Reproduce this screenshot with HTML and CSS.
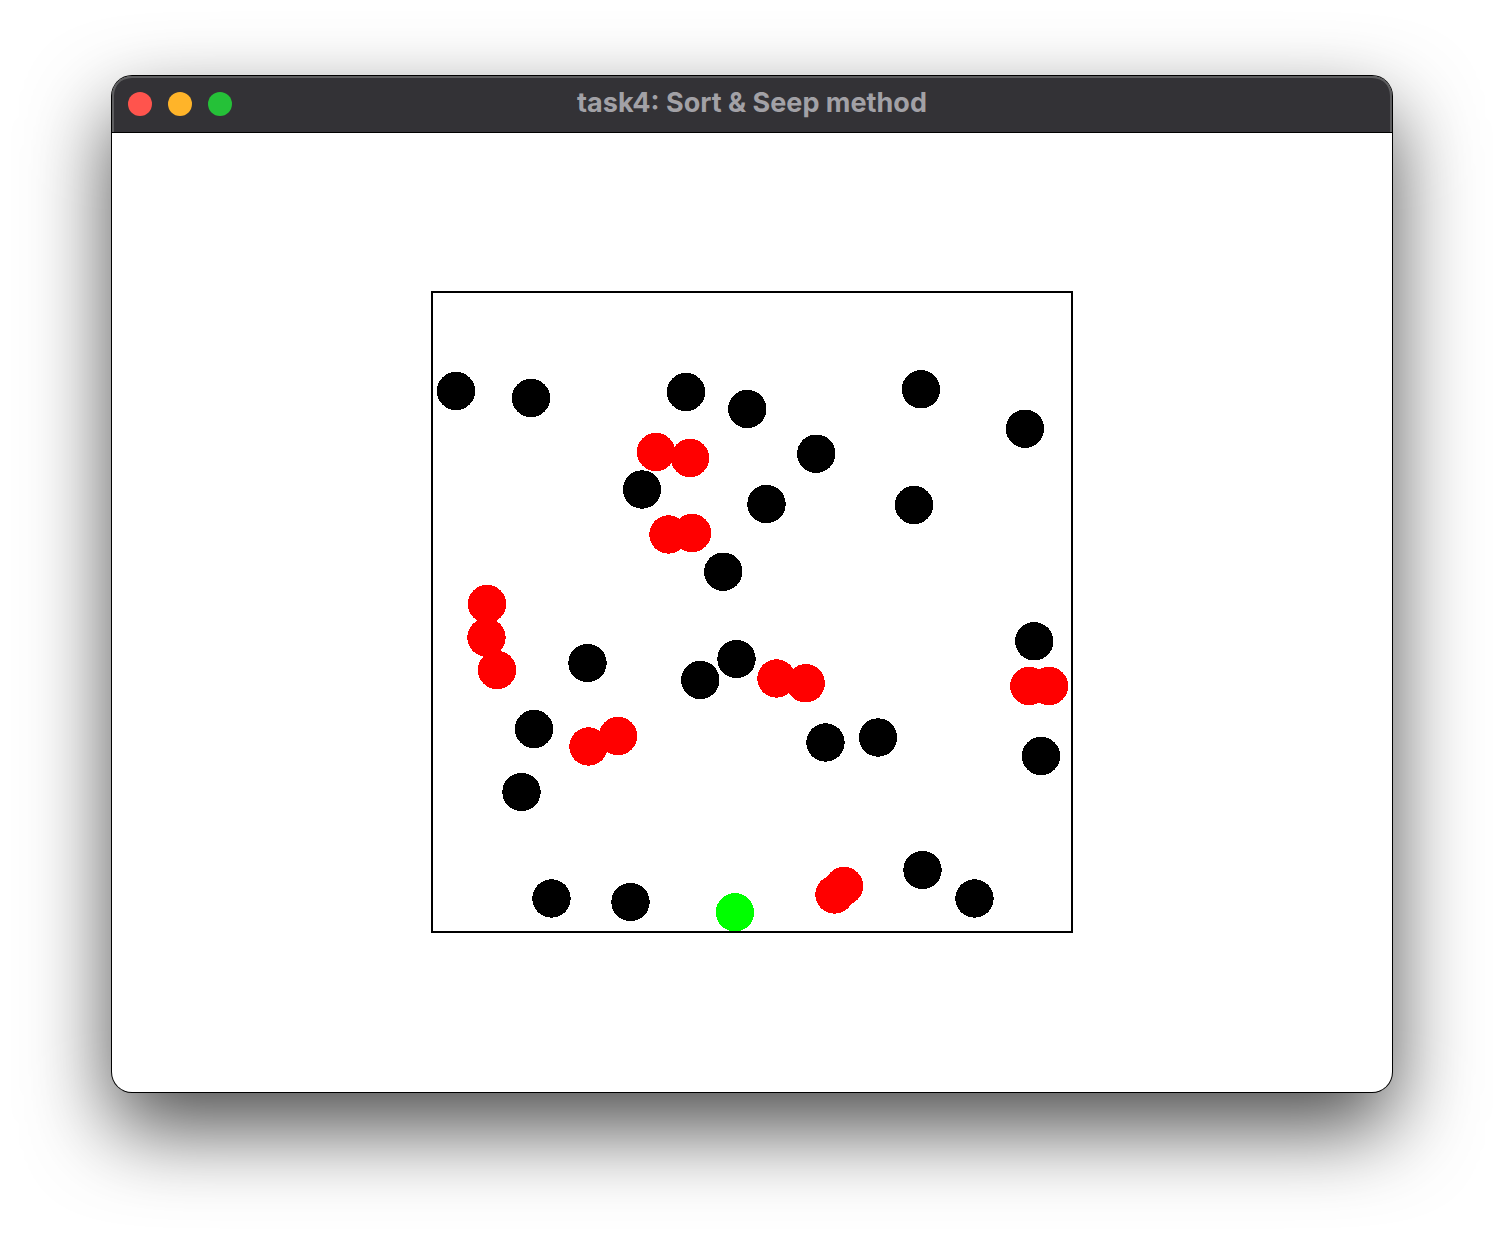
FILE: index.html
```html
<!DOCTYPE html>
<html lang="en">
<head>
<meta charset="utf-8">
<title>task4: Sort &amp; Seep method</title>
<link rel="stylesheet" href="styles.css">
</head>
<body>
<main class="window">
  <header class="titlebar">
    <div class="controls">
      <button class="control control-close" type="button" aria-label="Close"></button>
      <button class="control control-minimize" type="button" aria-label="Minimize"></button>
      <button class="control control-zoom" type="button" aria-label="Zoom"></button>
    </div>
    <h1 class="title">task4: Sort &amp; Seep method</h1>
  </header>
  <section class="canvas">
    <svg class="field" viewBox="-1 -1 642 642" shape-rendering="crispEdges" role="img" aria-label="Circles in a square, colliding ones in red">
      <rect class="bounds" x="0" y="0" width="640" height="640"/>
      <g class="free">
        <circle cx="24" cy="99" r="19.2"/>
        <circle cx="99" cy="106" r="19.2"/>
        <circle cx="254" cy="100" r="19.2"/>
        <circle cx="315.3" cy="117" r="19.2"/>
        <circle cx="489" cy="97.3" r="19.2"/>
        <circle cx="593" cy="136.700" r="19.2"/>
        <circle cx="384.3" cy="161.700" r="19.2"/>
        <circle cx="210" cy="197.500" r="19.2"/>
        <circle cx="334.500" cy="212" r="19.2"/>
        <circle cx="482" cy="213" r="19.2"/>
        <circle cx="291.3" cy="279.700" r="19.2"/>
        <circle cx="602.3" cy="349.3" r="19.2"/>
        <circle cx="155.500" cy="371" r="19.2"/>
        <circle cx="304.500" cy="367" r="19.2"/>
        <circle cx="268.3" cy="388" r="19.2"/>
        <circle cx="102" cy="437" r="19.2"/>
        <circle cx="393.500" cy="450.500" r="19.2"/>
        <circle cx="446" cy="445.500" r="19.2"/>
        <circle cx="609" cy="464" r="19.2"/>
        <circle cx="89.500" cy="500" r="19.2"/>
        <circle cx="119.500" cy="606.500" r="19.2"/>
        <circle cx="198.500" cy="610" r="19.2"/>
        <circle cx="490.500" cy="578" r="19.2"/>
        <circle cx="542.500" cy="606.500" r="19.2"/>
      </g>
      <g class="colliding">
        <circle cx="224" cy="160" r="19.2"/>
        <circle cx="258" cy="166" r="19.2"/>
        <circle cx="236.500" cy="242.500" r="19.2"/>
        <circle cx="260" cy="241" r="19.2"/>
        <circle cx="55" cy="312" r="19.2"/>
        <circle cx="54.500" cy="345.500" r="19.2"/>
        <circle cx="65" cy="378" r="19.2"/>
        <circle cx="344.500" cy="386.500" r="19.2"/>
        <circle cx="373.700" cy="391.3" r="19.2"/>
        <circle cx="597.3" cy="394" r="19.2"/>
        <circle cx="617" cy="394" r="19.2"/>
        <circle cx="156.500" cy="454.500" r="19.2"/>
        <circle cx="186" cy="444" r="19.2"/>
        <circle cx="402.500" cy="602.500" r="19.2"/>
        <circle cx="412" cy="594" r="19.2"/>
      </g>
      <circle class="source" cx="303" cy="620.3" r="19.2"/>
    </svg>
  </section>
</main>
</body>
</html>
```
FILE: styles.css
```css
* {
  box-sizing: border-box;
}

body {
  margin: 0;
  min-height: 100vh;
  padding: 76px 112px 148px;
  display: flex;
  background: #fff;
  font-family: Inter, "Liberation Sans", sans-serif;
}

.window {
  flex: 1;
  display: flex;
  flex-direction: column;
  border-radius: 20px;
  background: #fff;
  box-shadow: 0 0 0 1px #000, 0 36px 84px rgba(0, 0, 0, 0.7);
}

.titlebar {
  display: grid;
  grid-template-columns: 1fr auto 1fr;
  align-items: center;
  height: 56px;
  padding: 0 16px;
  border-radius: 20px 20px 0 0;
  background: #333236;
  box-shadow: inset 0 2px 0 #5e5e60, inset 2px 0 0 #5e5e60, inset -2px 0 0 #5e5e60, 0 1px 0 #000;
}

.controls {
  display: flex;
  gap: 16px;
}

.control {
  width: 24px;
  height: 24px;
  padding: 0;
  border: 0;
  border-radius: 50%;
}

.control-close {
  background: #ff544d;
}

.control-minimize {
  background: #ffb429;
}

.control-zoom {
  background: #25c138;
}

.title {
  margin: 0;
  padding-bottom: 2px;
  color: #a2a1a6;
  font-size: 27px;
  font-weight: 700;
  line-height: 32px;
}

.canvas {
  flex: 1;
  display: flex;
  align-items: center;
  justify-content: center;
}

.field {
  width: 100%;
  max-width: 642px;
}

.bounds {
  fill: none;
  stroke: #000;
  stroke-width: 2px;
}

.free {
  fill: #000;
}

.colliding {
  fill: #f00;
}

.source {
  fill: #0f0;
}
```
